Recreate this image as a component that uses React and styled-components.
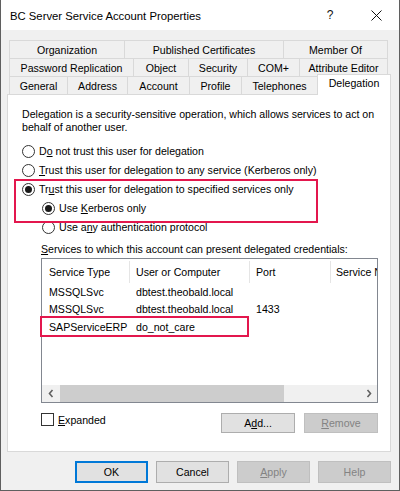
import React from "react";
import styled, { createGlobalStyle } from "styled-components";

const Global = createGlobalStyle`
  html, body { margin: 0; padding: 0; background: #f0f0f0; }
  body { font-family: "Liberation Sans", Arial, sans-serif; font-size: 10.6px; color: #000; }
  * { box-sizing: border-box; }
`;

const Window = styled.div`
  width: 400px;
  height: 491px;
  background: #f0f0f0;
  border: 1px solid #5f5f5f;
  border-top: none;
  display: flex;
  flex-direction: column;
`;

const TitleBar = styled.div`
  height: 30px;
  background: #fff;
  display: flex;
  align-items: center;
`;

const Title = styled.div`
  flex: 1;
  padding-left: 9px;
  font-size: 11.3px;
  padding-top: 1px;
`;

const TitleButton = styled.div`
  width: 46px;
  height: 30px;
  display: flex;
  align-items: center;
  justify-content: center;
  font-size: 12px;
  color: #111;
`;

const Body = styled.div`
  flex: 1;
  padding: 10px 8px 7px 6px;
  display: flex;
  flex-direction: column;
`;

const Tabs = styled.div`
  display: flex;
  flex-direction: column;
  margin-left: 2px;
`;

const TabRow = styled.div`
  display: flex;
  height: 18px;
  align-items: flex-end;
`;

const Tab = styled.div`
  width: ${(p) => p.$w}px;
  height: 18px;
  border-top: 1px solid #d9d9d9;
  border-left: 1px solid #d9d9d9;
  &:last-child { border-right: 1px solid #d9d9d9; }
  background: #f0f0f0;
  display: flex;
  align-items: center;
  justify-content: center;
  white-space: nowrap;
  padding-top: 1px;
`;

const ActiveTab = styled.div`
  width: ${(p) => p.$w}px;
  height: 21px;
  margin-top: -2px;
  margin-bottom: -1px;
  position: relative;
  z-index: 1;
  background: #fff;
  border: 1px solid #d9d9d9;
  border-bottom: none;
  display: flex;
  align-items: center;
  justify-content: center;
  padding-bottom: 4px;
`;

const Panel = styled.div`
  height: 358px;
  background: #fff;
  border: 1px solid #d9d9d9;
  padding: 13px 10px 0 14px;
  display: flex;
  flex-direction: column;
`;

const Desc = styled.div`
  line-height: 12.5px;
  width: 360px;
`;

const RadioList = styled.div`
  margin-top: 8.5px;
  display: flex;
  flex-direction: column;
`;

const RadioRow = styled.div`
  height: 19px;
  display: flex;
  align-items: center;
  gap: 4px;
  padding-left: ${(p) => (p.$sub ? 20 : 0)}px;
  white-space: nowrap;
`;

const Circle = styled.span`
  width: 13px;
  height: 13px;
  border-radius: 50%;
  border: 1px solid #333;
  background: #fff;
  display: flex;
  align-items: center;
  justify-content: center;
  flex: none;
  &::after {
    content: "";
    display: ${(p) => (p.$on ? "block" : "none")};
    width: 7px;
    height: 7px;
    border-radius: 50%;
    background: #1a1a1a;
  }
`;

const Highlight = styled.div`
  position: relative;
  &::after {
    content: "";
    position: absolute;
    left: -8px;
    top: -1px;
    width: 300px;
    height: 40px;
    border: 2px solid #e3174d;
    pointer-events: none;
  }
`;

const U = styled.span`
  text-decoration: underline;
  text-underline-offset: 1px;
`;

const SectionLabel = styled.div`
  margin: 5px 0 0 19px;
  line-height: 14px;
`;

const ListBox = styled.div`
  position: relative;
  margin: 2.5px 0 0 19px;
  width: 337px;
  height: 145px;
  border: 1px solid #828790;
  background: #fff;
  display: flex;
  flex-direction: column;
`;

const ListViewport = styled.div`
  flex: 1;
  overflow: hidden;
`;

const HeaderRow = styled.div`
  display: flex;
  height: 24px;
  align-items: center;
  padding-top: 2px;
  width: 460px;
`;

const HeaderCell = styled.div`
  width: ${(p) => p.$w}px;
  height: 22px;
  padding-left: ${(p) => p.$pl}px;
  border-right: 1px solid #e5e5e5;
  display: flex;
  align-items: center;
  white-space: nowrap;
  flex: none;
`;

const Row = styled.div`
  display: flex;
  height: 17.5px;
  align-items: center;
  width: 460px;
`;

const Cell = styled.div`
  width: ${(p) => p.$w}px;
  padding-left: ${(p) => p.$pl}px;
  white-space: nowrap;
  flex: none;
`;

const RowMark = styled.div`
  position: absolute;
  left: -2px;
  top: 57px;
  width: 209px;
  height: 21px;
  border: 2px solid #e3174d;
  pointer-events: none;
`;

const HScroll = styled.div`
  height: 17px;
  display: flex;
  background: #f0f0f0;
`;

const ScrollArrow = styled.div`
  width: 17px;
  display: flex;
  align-items: center;
  justify-content: center;
`;

const ScrollTrack = styled.div`
  flex: 1;
  display: flex;
  align-items: stretch;
`;

const Thumb = styled.div`
  width: ${(p) => p.$w}px;
  margin-left: 1px;
  background: #cdcdcd;
`;

const ActionRow = styled.div`
  margin: 10px 0 0 19px;
  width: 337px;
  display: flex;
  align-items: flex-start;
`;

const CheckLabel = styled.div`
  flex: 1;
  display: flex;
  align-items: center;
  gap: 4px;
  height: 13px;
`;

const Box = styled.span`
  width: 13px;
  height: 13px;
  border: 1px solid #333;
  background: #fff;
  flex: none;
`;

const Button = styled.div`
  width: ${(p) => p.$w || 73}px;
  height: ${(p) => p.$h || 22}px;
  display: flex;
  align-items: center;
  justify-content: center;
  background: ${(p) => (p.$disabled ? "#cccccc" : "#e1e1e1")};
  color: ${(p) => (p.$disabled ? "#838383" : "#000")};
  border: ${(p) =>
    p.$default ? "2px solid #0078d7" : p.$disabled ? "1px solid #bfbfbf" : "1px solid #adadad"};
  margin-left: ${(p) => p.$ml || 0}px;
`;

const ButtonBar = styled.div`
  margin-top: 9px;
  display: flex;
  justify-content: flex-end;
  gap: 8px;
`;

const Chevron = ({ dir }) => (
  <svg width="6" height="9" viewBox="0 0 6 9">
    <path
      d={dir === "left" ? "M4.5 1 L1.5 4.5 L4.5 8" : "M1.5 1 L4.5 4.5 L1.5 8"}
      fill="none"
      stroke="#606060"
      strokeWidth="1.6"
    />
  </svg>
);

const rows = [
  ["MSSQLSvc", "dbtest.theobald.local", ""],
  ["MSSQLSvc", "dbtest.theobald.local", "1433"],
  ["SAPServiceERP", "do_not_care", ""],
];

export default function App() {
  return (
    <>
      <Global />
      <Window>
        <TitleBar>
          <Title>BC Server Service Account Properties</Title>
          <TitleButton>?</TitleButton>
          <TitleButton>
            <svg width="11" height="11" viewBox="0 0 11 11">
              <path d="M0.5 0.5 L10.5 10.5 M10.5 0.5 L0.5 10.5" stroke="#111" strokeWidth="1" />
            </svg>
          </TitleButton>
        </TitleBar>
        <Body>
          <Tabs>
            <TabRow>
              <Tab $w={115}>Organization</Tab>
              <Tab $w={159}>Published Certificates</Tab>
              <Tab $w={105}>Member Of</Tab>
            </TabRow>
            <TabRow>
              <Tab $w={124}>Password Replication</Tab>
              <Tab $w={55}>Object</Tab>
              <Tab $w={59}>Security</Tab>
              <Tab $w={52}>COM+</Tab>
              <Tab $w={89}>Attribute Editor</Tab>
            </TabRow>
            <TabRow>
              <Tab $w={58}>General</Tab>
              <Tab $w={60}>Address</Tab>
              <Tab $w={62}>Account</Tab>
              <Tab $w={52}>Profile</Tab>
              <Tab $w={76}>Telephones</Tab>
              <ActiveTab $w={74}>Delegation</ActiveTab>
            </TabRow>
          </Tabs>
          <Panel>
            <Desc>
              Delegation is a security-sensitive operation, which allows services to act on behalf of
              another user.
            </Desc>
            <RadioList>
              <RadioRow>
                <Circle />
                <span>
                  D<U>o</U> not trust this user for delegation
                </span>
              </RadioRow>
              <RadioRow>
                <Circle />
                <span>
                  <U>T</U>rust this user for delegation to any service (Kerberos only)
                </span>
              </RadioRow>
              <Highlight>
                <RadioRow>
                  <Circle $on />
                  <span>
                    Tr<U>u</U>st this user for delegation to specified services only
                  </span>
                </RadioRow>
                <RadioRow $sub>
                  <Circle $on />
                  <span>
                    Use <U>K</U>erberos only
                  </span>
                </RadioRow>
              </Highlight>
              <RadioRow $sub>
                <Circle />
                <span>
                  Use a<U>n</U>y authentication protocol
                </span>
              </RadioRow>
            </RadioList>
            <SectionLabel>
              <U>S</U>ervices to which this account can present delegated credentials:
            </SectionLabel>
            <ListBox>
              <ListViewport>
                <HeaderRow>
                  <HeaderCell $w={88} $pl={7}>Service Type</HeaderCell>
                  <HeaderCell $w={120} $pl={6}>User or Computer</HeaderCell>
                  <HeaderCell $w={81} $pl={6}>Port</HeaderCell>
                  <HeaderCell $w={120} $pl={5}>Service Name</HeaderCell>
                </HeaderRow>
                {rows.map((r, i) => (
                  <Row key={i}>
                    <Cell $w={88} $pl={7}>{r[0]}</Cell>
                    <Cell $w={120} $pl={6}>{r[1]}</Cell>
                    <Cell $w={81} $pl={6}>{r[2]}</Cell>
                  </Row>
                ))}
              </ListViewport>
              <HScroll>
                <ScrollArrow>
                  <Chevron dir="left" />
                </ScrollArrow>
                <ScrollTrack>
                  <Thumb $w={224} />
                </ScrollTrack>
                <ScrollArrow>
                  <Chevron dir="right" />
                </ScrollArrow>
              </HScroll>
              <RowMark />
            </ListBox>
            <ActionRow>
              <CheckLabel>
                <Box />
                <span>
                  <U>E</U>xpanded
                </span>
              </CheckLabel>
              <Button $w={74} $h={20}>
                A<U>d</U>d...
              </Button>
              <Button $w={74} $h={20} $ml={9} $disabled>
                <U>R</U>emove
              </Button>
            </ActionRow>
          </Panel>
          <ButtonBar>
            <Button $default>OK</Button>
            <Button>Cancel</Button>
            <Button $disabled>
              <U>A</U>pply
            </Button>
            <Button $disabled>Help</Button>
          </ButtonBar>
        </Body>
      </Window>
    </>
  );
}
